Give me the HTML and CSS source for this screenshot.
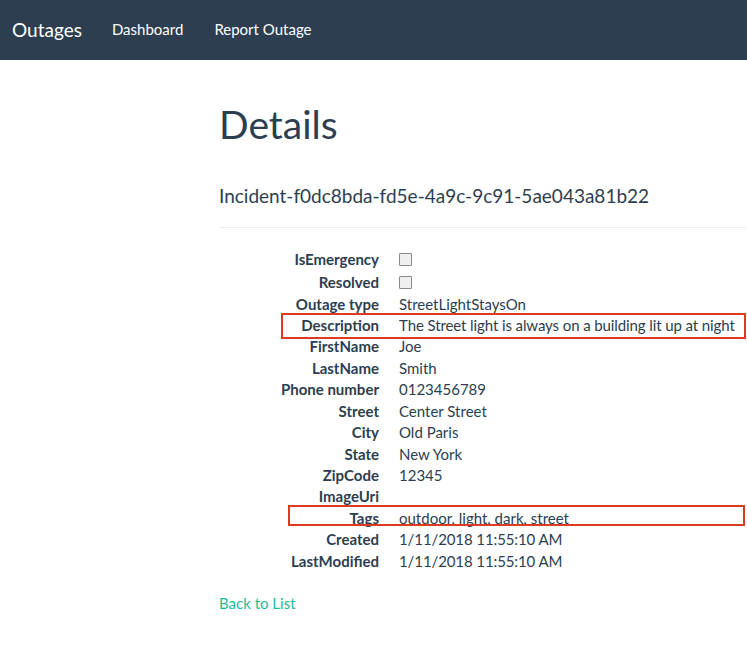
FILE: index.html
```html
<!DOCTYPE html>
<html>
<head>
<meta charset="utf-8">
<link rel="stylesheet" href="styles.css">
</head>
<body>
<nav class="navbar">
  <a class="brand" href="#">Outages</a>
  <a class="nav-link" href="#">Dashboard</a>
  <a class="nav-link" href="#">Report Outage</a>
</nav>
<main class="container">
  <h1 class="title">Details</h1>
  <h4 class="subtitle">Incident-f0dc8bda-fd5e-4a9c-9c91-5ae043a81b22</h4>
  <hr class="rule">
  <dl class="details">
    <div class="row row-check"><dt>IsEmergency</dt><dd><span class="checkbox"></span></dd></div>
    <div class="row row-check"><dt>Resolved</dt><dd><span class="checkbox"></span></dd></div>
    <div class="row"><dt>Outage type</dt><dd>StreetLightStaysOn</dd></div>
    <div class="row"><dt>Description</dt><dd class="tight">The Street light is always on a building lit up at night</dd></div>
    <div class="row"><dt>FirstName</dt><dd>Joe</dd></div>
    <div class="row"><dt>LastName</dt><dd>Smith</dd></div>
    <div class="row"><dt>Phone number</dt><dd>0123456789</dd></div>
    <div class="row"><dt>Street</dt><dd>Center Street</dd></div>
    <div class="row"><dt>City</dt><dd>Old Paris</dd></div>
    <div class="row"><dt>State</dt><dd>New York</dd></div>
    <div class="row"><dt>ZipCode</dt><dd>12345</dd></div>
    <div class="row"><dt>ImageUri</dt><dd></dd></div>
    <div class="row"><dt>Tags</dt><dd>outdoor, light, dark, street</dd></div>
    <div class="row"><dt>Created</dt><dd class="tight">1/11/2018 11:55:10 AM</dd></div>
    <div class="row"><dt>LastModified</dt><dd class="tight">1/11/2018 11:55:10 AM</dd></div>
  </dl>
  <p class="back"><a href="#">Back to List</a></p>
</main>
<div class="highlight highlight-desc"></div>
<div class="highlight highlight-tags"></div>
</body>
</html>
```

FILE: styles.css
```css
* { box-sizing: border-box; }
html, body { margin: 0; padding: 0; }
body {
  font-family: Lato, "Noto Sans", sans-serif;
  font-size: 15px;
  line-height: 1.42857;
  color: #2c3e50;
  background: #fff;
  position: relative;
  overflow: hidden;
}
a { text-decoration: none; }
.navbar {
  height: 60px;
  background: #2c3e50;
  display: flex;
  align-items: center;
  padding-left: 12px;
}
.brand {
  color: #fff;
  font-size: 19px;
  margin-right: 30px;
}
.nav-link {
  color: #fff;
  font-size: 15px;
  margin-right: 31px;
}
.container {
  padding-left: 219px;
}
.title {
  font-size: 39px;
  font-weight: 400;
  line-height: 1.1;
  margin: 43px 0 0;
}
.subtitle {
  font-size: 19px;
  font-weight: 400;
  line-height: 1.1;
  margin: 40px 0 0;
}
.rule {
  border: 0;
  border-top: 1px solid #eee;
  margin: 20px 0 21px;
}
.details {
  margin: 0 0 21px;
}
.row {
  display: flex;
  height: 21.43px;
  align-items: center;
}
.row-check {
  height: 22.4px;
}
.row dt {
  width: 160px;
  text-align: right;
  font-weight: 700;
  margin-right: 20px;
  white-space: nowrap;
}
.row dd {
  margin: 0;
  display: flex;
  align-items: center;
  white-space: nowrap;
}
.row dd.tight {
  letter-spacing: -0.1px;
}
.checkbox {
  display: inline-block;
  width: 13px;
  height: 13px;
  border: 1px solid #8a8a8a;
  background: #efefef;
  border-radius: 1px;
}
.back { margin: 0; }
.back a { color: #18bc9c; }
.highlight {
  position: absolute;
  border: 2px solid #dc3b1f;
}
.highlight-desc { left: 281px; top: 313px; width: 465px; height: 26px; }
.highlight-tags { left: 288px; top: 505px; width: 457px; height: 21px; }
```
